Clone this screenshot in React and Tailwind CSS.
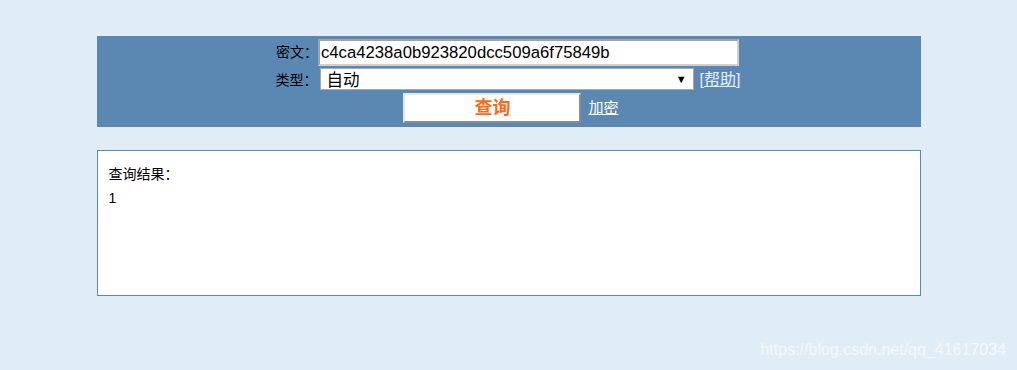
export default function App() {
  const font = { fontFamily: '"Liberation Sans", "Noto Sans CJK SC", sans-serif' }
  return (
    <div className="relative w-[1017px] h-[370px] bg-[#e1edf6] overflow-hidden" style={font}>
      <div className="pt-[36px] flex flex-col items-center">
        <div className="w-[824px] bg-[#5b88b3] pt-[3px] pb-[4px] flex flex-col items-center">
          <div className="flex items-center h-[27px] ml-[-2px]">
            <span className="text-[14px] text-black">密文：</span>
            <input
              defaultValue="c4ca4238a0b923820dcc509a6f75849b"
              className="w-[421px] h-[27px] bg-white border-2 border-t-[#a3a3a3] border-l-[#a3a3a3] border-r-[#d0d0d0] border-b-[#d0d0d0] px-[1px] text-[16.7px] text-black outline-none"
              style={font}
            />
          </div>
          <div className="flex items-center h-[22px] mt-[2px] ml-[-1px]">
            <span className="text-[14px] text-black mr-[2px] pt-[2px]">类型：</span>
            <div className="w-[374px] h-[22px] bg-white border border-[#a9a9a9] flex items-center pl-[6px] pr-[6px] text-[16.5px] text-black">
              <span className="flex-1 pt-[3px]">自动</span>
              <span className="text-[11px]">▼</span>
            </div>
            <span className="ml-[6px] text-[16px] text-[#e6f0fa] pt-[2px]">
              [<span className="underline">帮助</span>]
            </span>
          </div>
          <div className="flex items-center h-[30px] mt-[3px] ml-[5px]">
            <button
              className="w-[178px] h-[30px] bg-white border-2 border-t-[#e8e8e8] border-l-[#e8e8e8] border-r-[#8c8c8c] border-b-[#8c8c8c] text-[18px] font-bold text-[#ff6a13]"
              style={font}
            >
              查询
            </button>
            <span className="ml-[7px] text-[15px] text-white underline">加密</span>
          </div>
        </div>
        <div className="mt-[23px] w-[824px] h-[146px] bg-white border border-[#5b88b3] px-[11px] pt-[11px] text-[14px] text-black leading-[24px]">
          <div>查询结果：</div>
          <div>1</div>
        </div>
      </div>
      <div className="absolute right-[11px] bottom-[8px] text-[16px] text-white/60">
        https://blog.csdn.net/qq_41617034
      </div>
    </div>
  )
}
